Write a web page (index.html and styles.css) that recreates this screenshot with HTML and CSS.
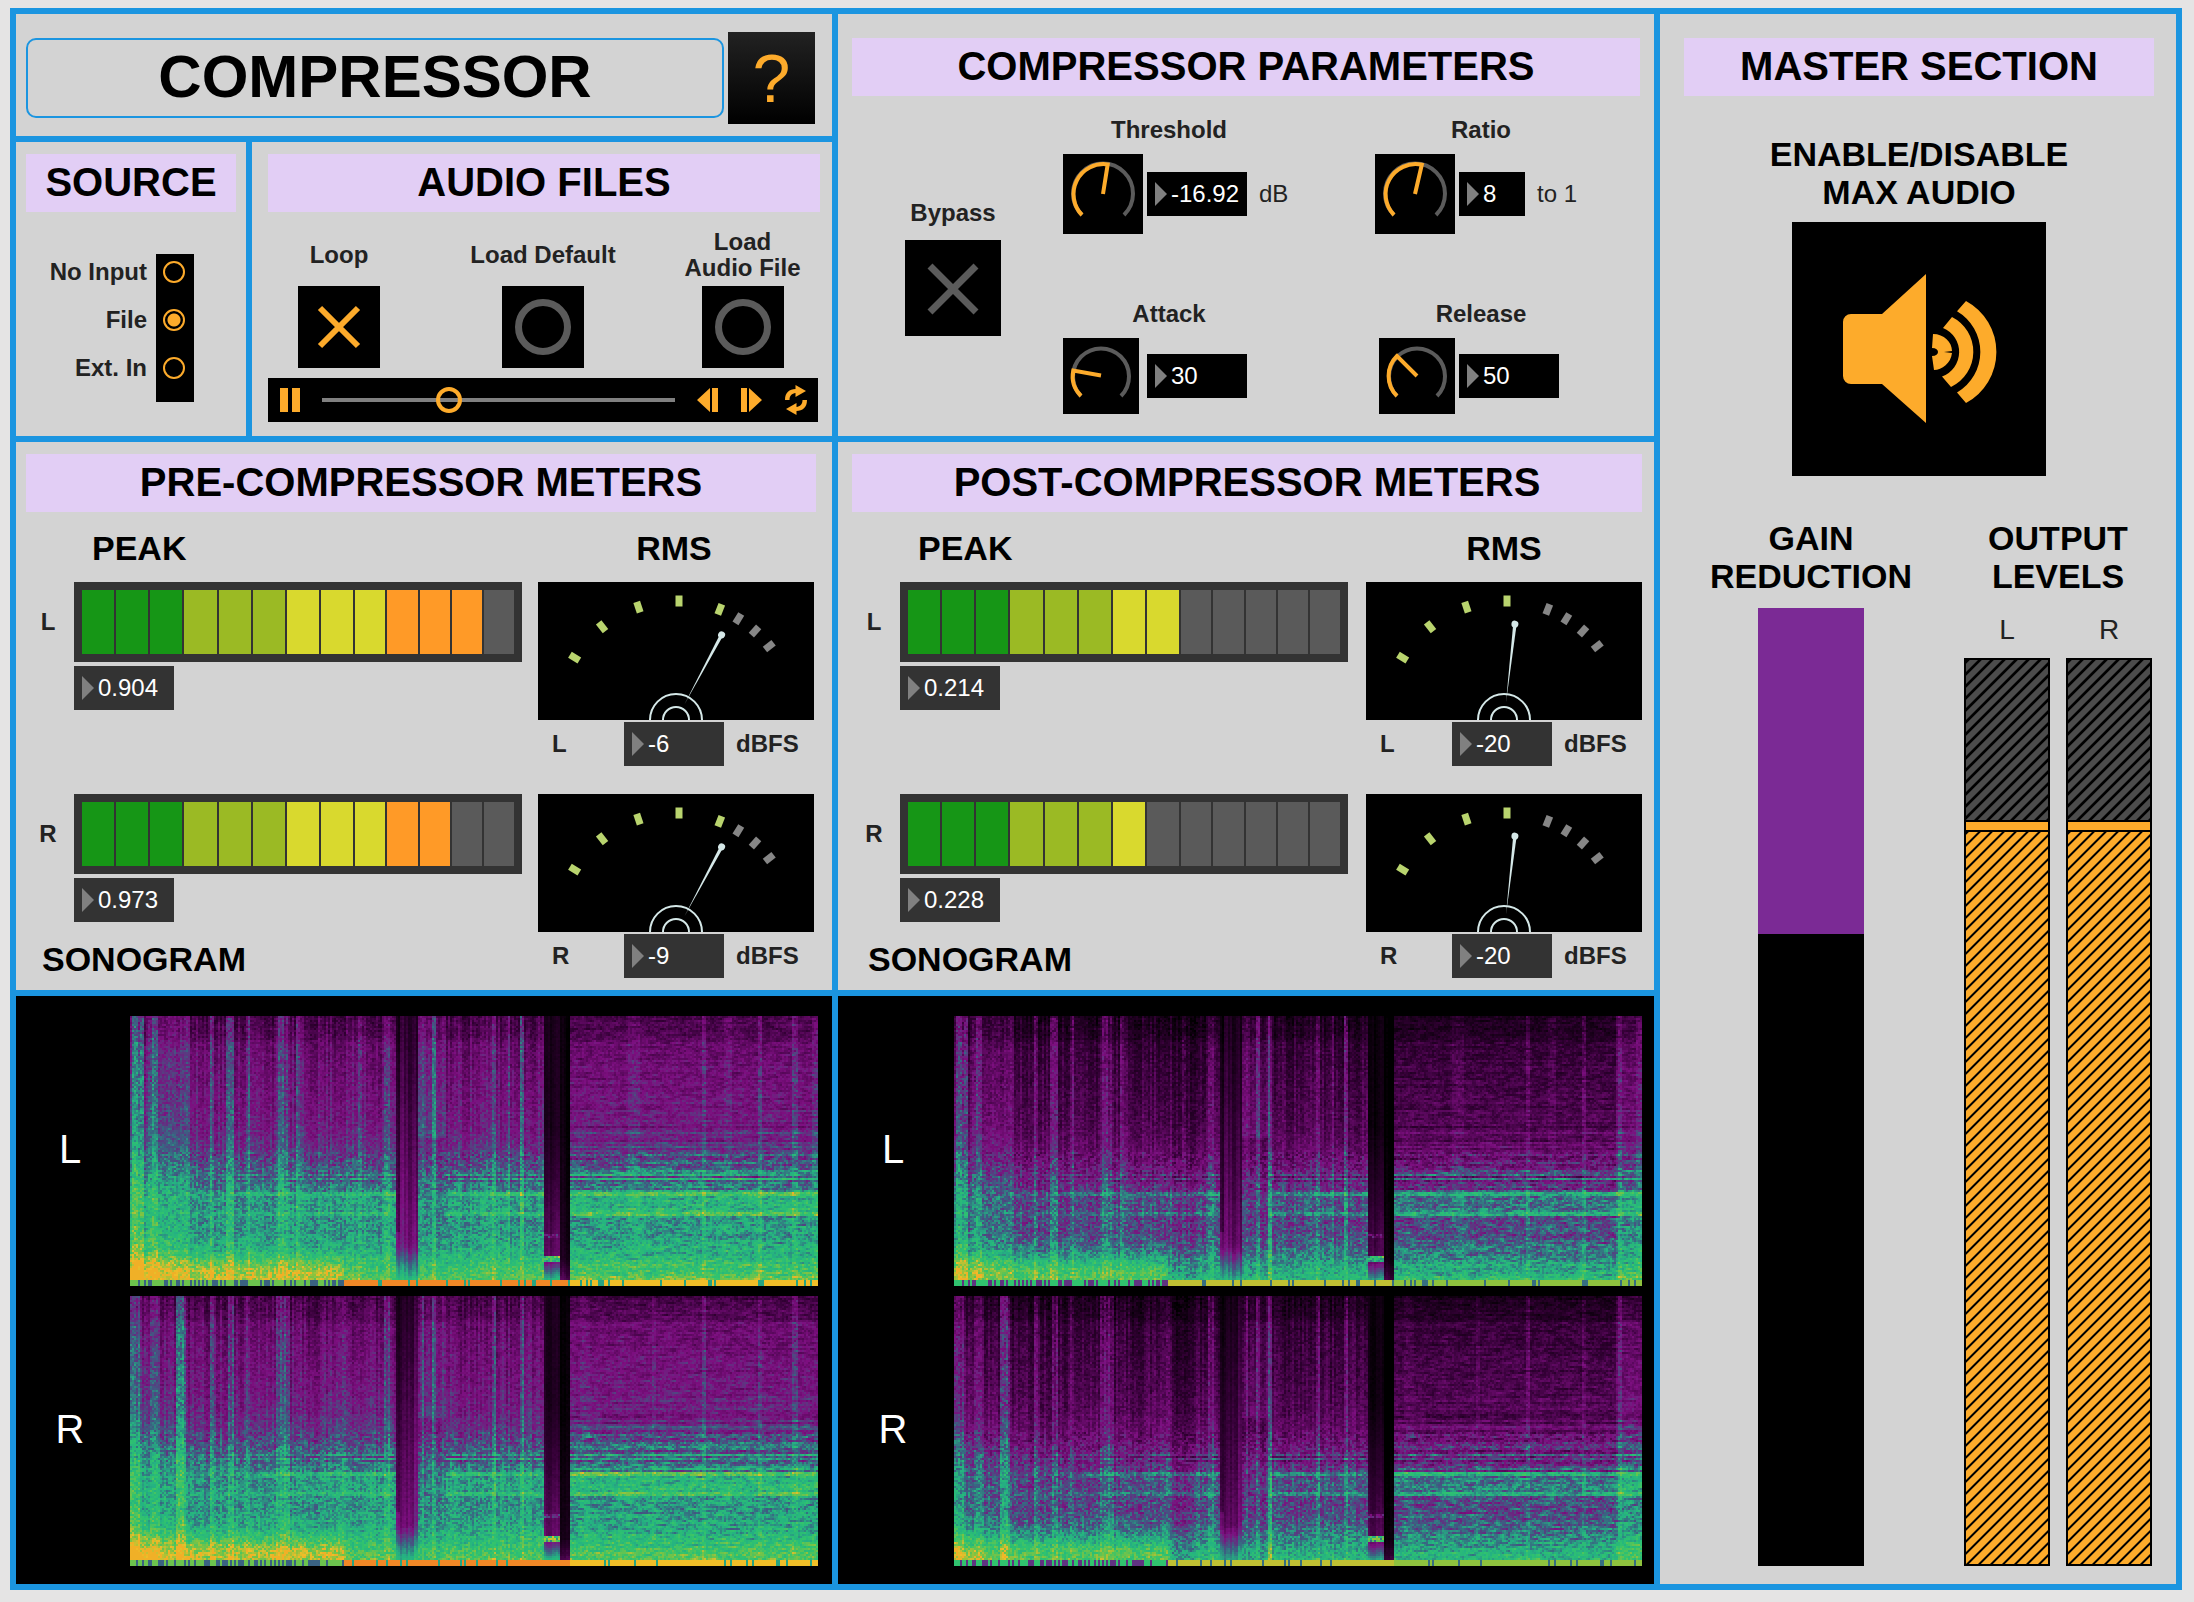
FILE: index.html
```html
<!DOCTYPE html>
<html lang="en">
<head>
<meta charset="UTF-8" /><meta name="viewport" content="width=device-width, initial-scale=1" />
<title>Compressor</title>
<link rel="stylesheet" href="styles.css">
</head>
<body>
<svg class="defs" aria-hidden="true">
  <symbol id="dial" viewBox="0 0 276 138">
    <g fill="#b9d46e">
      <rect x="134.5" y="13.5" width="7" height="11" transform="rotate(-58.4 138 138)"/>
      <rect x="134.5" y="13.5" width="7" height="11" transform="rotate(-38.4 138 138)"/>
      <rect x="134.5" y="13.5" width="7" height="11" transform="rotate(-18.4 138 138)"/>
      <rect x="137.5" y="13.5" width="7" height="11"/>
    </g>
    <g fill="#868686">
      <rect x="134.5" y="13.5" width="7" height="11" transform="rotate(31.6 138 138)"/>
      <rect x="134.5" y="13.5" width="7" height="11" transform="rotate(41.6 138 138)"/>
      <rect x="134.5" y="13.5" width="7" height="11" transform="rotate(51.6 138 138)"/>
    </g>
    <g fill="none" stroke="#d5e8e8" stroke-width="2">
      <circle cx="138" cy="138" r="26"/>
      <circle cx="138" cy="138" r="13"/>
    </g>
  </symbol>
  <symbol id="tick" viewBox="0 0 276 138">
    <rect x="134.5" y="13.5" width="7" height="11" transform="rotate(21.6 138 138)"/>
  </symbol>
  <symbol id="needle" viewBox="0 0 276 138" overflow="visible">
    <path d="M138 120L136.3 43h3.4z"/>
    <circle cx="138" cy="41.5" r="3.5"/>
  </symbol>
</svg>
<main class="app">
  <header class="panel title-panel">
    <h1>COMPRESSOR</h1>
    <button type="button" class="help" aria-label="Help">?</button>
  </header>

  <section class="panel params">
    <h2>COMPRESSOR PARAMETERS</h2>
    <div class="params-body">
      <div class="bypass">
        <label for="bypass">Bypass</label>
        <button type="button" id="bypass" class="toggle" aria-pressed="false">
          <svg width="96" height="96" viewBox="0 0 96 96"><path d="M25 26L71 72M71 26L25 72" stroke="#5b5b5b" stroke-width="7"/></svg>
        </button>
      </div>
      <div class="param">
        <label for="threshold">Threshold</label>
        <div class="control">
          <span class="knob"><svg width="80" height="80" viewBox="0 0 80 80"><path class="arc" d="M19 61A30 30 0 1 1 61 61"/><path class="val" d="M19 61A30 30 0 0 1 44.7 10.4L40 40"/></svg></span>
          <span class="num black"><input type="text" id="threshold" value="-16.92"></span>
          <span class="unit">dB</span>
        </div>
      </div>
      <div class="param">
        <label for="ratio">Ratio</label>
        <div class="control">
          <span class="knob"><svg width="80" height="80" viewBox="0 0 80 80"><path class="arc" d="M19 61A30 30 0 1 1 61 61"/><path class="val" d="M19 61A30 30 0 0 1 46.8 10.8L40 40"/></svg></span>
          <span class="num black narrow"><input type="text" id="ratio" value="8"></span>
          <span class="unit">to 1</span>
        </div>
      </div>
      <div class="param">
        <label for="attack">Attack</label>
        <div class="control">
          <span class="knob"><svg width="76" height="76" viewBox="0 0 76 76"><path class="arc" d="M18 58A28 28 0 1 1 58 58"/><path class="val" d="M18 58A28 28 0 0 1 10.3 32.5L38 37.5"/></svg></span>
          <span class="num black"><input type="text" id="attack" value="30"></span>
        </div>
      </div>
      <div class="param">
        <label for="release">Release</label>
        <div class="control">
          <span class="knob right"><svg width="76" height="76" viewBox="0 0 76 76"><path class="arc" d="M18 58A28 28 0 1 1 58 58"/><path class="val" d="M18 58A28 28 0 0 1 18 18L38 38"/></svg></span>
          <span class="num black"><input type="text" id="release" value="50"></span>
        </div>
      </div>
    </div>
  </section>

  <section class="panel master">
    <h2>MASTER SECTION</h2>
    <label for="power" class="sub center power-label">ENABLE/DISABLE<br>MAX AUDIO</label>
    <button type="button" id="power" class="power" aria-pressed="true">
      <svg width="254" height="254" viewBox="0 0 254 254" fill="#fdab2b">
        <path d="M59 92H90L134 52V201L90 162H59a8 8 0 0 1-8-8V100a8 8 0 0 1 8-8z"/>
        <path d="M141 112C152 112 160 120 160 129L152 130L160 131C159 141 150 148 142 148L140 134C148 134 148 126 140 126z"/>
        <path d="M160 95A39 39 0 0 1 159 165L150 154.5A26 26 0 0 0 151 106z"/>
        <path d="M174 79A58 58 0 0 1 174 181L165 170.5A47 47 0 0 0 165 89.3z"/>
      </svg>
    </button>
    <div class="levels">
      <div class="gain">
        <h3 class="sub center">GAIN<br>REDUCTION</h3>
        <div class="gain-bar"><div class="gain-fill" style="height:34%"></div></div>
      </div>
      <div class="output">
        <h3 class="sub center">OUTPUT<br>LEVELS</h3>
        <div class="output-bars">
          <div class="out"><span>L</span><div class="fader"><div class="off" style="height:160px"></div><div class="line"></div><div class="on"></div></div></div>
          <div class="out"><span>R</span><div class="fader"><div class="off" style="height:160px"></div><div class="line"></div><div class="on"></div></div></div>
        </div>
      </div>
    </div>
  </section>

  <div class="inputs">
    <section class="panel source">
      <h2>SOURCE</h2>
      <div class="source-body" role="radiogroup" aria-label="Source">
        <div class="source-labels">
          <label for="src-none">No Input</label>
          <label for="src-file">File</label>
          <label for="src-ext">Ext. In</label>
        </div>
        <div class="source-radios">
          <input type="radio" name="source" id="src-none">
          <input type="radio" name="source" id="src-file" checked>
          <input type="radio" name="source" id="src-ext">
        </div>
      </div>
    </section>
    <section class="panel files">
      <h2>AUDIO FILES</h2>
      <div class="file-buttons">
        <div class="file-btn">
          <label for="loop">Loop</label>
          <button type="button" id="loop" class="toggle" aria-pressed="true">
            <svg width="82" height="82" viewBox="0 0 82 82"><path d="M22 22L60 60M60 22L22 60" stroke="#fdab2b" stroke-width="6"/></svg>
          </button>
        </div>
        <div class="file-btn">
          <label for="load-default">Load Default</label>
          <button type="button" id="load-default" class="toggle">
            <svg width="82" height="82" viewBox="0 0 82 82"><circle cx="41" cy="41" r="24.5" fill="none" stroke="#5b5b5b" stroke-width="7"/></svg>
          </button>
        </div>
        <div class="file-btn">
          <label for="load-file">Load<br>Audio File</label>
          <button type="button" id="load-file" class="toggle">
            <svg width="82" height="82" viewBox="0 0 82 82"><circle cx="41" cy="41" r="24.5" fill="none" stroke="#5b5b5b" stroke-width="7"/></svg>
          </button>
        </div>
      </div>
      <div class="player">
        <button type="button" aria-label="Pause"><svg width="20" height="24" viewBox="0 0 20 24"><path d="M0 0h8v24H0zM12 0h8v24h-8z"/></svg></button>
        <input type="range" class="seek" min="0" max="100" value="35" aria-label="Position">
        <button type="button" aria-label="Previous"><svg width="22" height="24" viewBox="0 0 22 24"><path d="M0 12L13 0v24zM15 0h6v24h-6z"/></svg></button>
        <button type="button" aria-label="Next"><svg width="22" height="24" viewBox="0 0 22 24"><path d="M21 12L8 0v24zM0 0h6v24H0z"/></svg></button>
        <button type="button" aria-label="Repeat"><svg width="22" height="30" viewBox="0 0 22 30"><path d="M0 15C0 7.500 4.500 4 10.500 4V0L21 6L10.500 12V8C7 8.500 4.500 10.500 4.500 15zM22 15C22 22.500 17.500 26 11.500 26V30L1 24L11.500 18V22C15 21.500 17.500 19.500 17.500 15z"/></svg></button>
      </div>
    </section>
  </div>

  <section class="panel meters pre">
    <h2>PRE-COMPRESSOR METERS</h2>
    <div class="meter-heads"><h3 class="sub">PEAK</h3><h3 class="sub center">RMS</h3></div>
    <div class="channel">
      <span class="side">L</span>
      <div class="leds" data-lit="12"></div>
      <span class="num peak"><input type="text" value="0.904" aria-label="Peak left"></span>
      <div class="rms">
        <svg class="vu" viewBox="0 0 276 138"><use href="#dial"/><use href="#tick" fill="#b9d46e"/><g fill="#d5e8e8" transform="rotate(28.2 138 138)"><use href="#needle"/></g></svg>
        <div class="readout"><label for="pre-l">L</label><span class="num"><input type="text" id="pre-l" value="-6"></span><span>dBFS</span></div>
      </div>
    </div>
    <div class="channel">
      <span class="side">R</span>
      <div class="leds" data-lit="11"></div>
      <span class="num peak"><input type="text" value="0.973" aria-label="Peak right"></span>
      <h3 class="sub sono-title">SONOGRAM</h3>
      <div class="rms">
        <svg class="vu" viewBox="0 0 276 138"><use href="#dial"/><use href="#tick" fill="#b9d46e"/><g fill="#d5e8e8" transform="rotate(28.2 138 138)"><use href="#needle"/></g></svg>
        <div class="readout"><label for="pre-r">R</label><span class="num"><input type="text" id="pre-r" value="-9"></span><span>dBFS</span></div>
      </div>
    </div>
  </section>

  <section class="panel meters post">
    <h2>POST-COMPRESSOR METERS</h2>
    <div class="meter-heads"><h3 class="sub">PEAK</h3><h3 class="sub center">RMS</h3></div>
    <div class="channel">
      <span class="side">L</span>
      <div class="leds" data-lit="8"></div>
      <span class="num peak"><input type="text" value="0.214" aria-label="Peak left"></span>
      <div class="rms">
        <svg class="vu" viewBox="0 0 276 138"><use href="#dial"/><use href="#tick" fill="#868686"/><g fill="#d5e8e8" transform="rotate(6.5 138 138)"><use href="#needle"/></g></svg>
        <div class="readout"><label for="post-l">L</label><span class="num"><input type="text" id="post-l" value="-20"></span><span>dBFS</span></div>
      </div>
    </div>
    <div class="channel">
      <span class="side">R</span>
      <div class="leds" data-lit="7"></div>
      <span class="num peak"><input type="text" value="0.228" aria-label="Peak right"></span>
      <h3 class="sub sono-title">SONOGRAM</h3>
      <div class="rms">
        <svg class="vu" viewBox="0 0 276 138"><use href="#dial"/><use href="#tick" fill="#868686"/><g fill="#d5e8e8" transform="rotate(6.5 138 138)"><use href="#needle"/></g></svg>
        <div class="readout"><label for="post-r">R</label><span class="num"><input type="text" id="post-r" value="-20"></span><span>dBFS</span></div>
      </div>
    </div>
  </section>

  <section class="sono pre" aria-label="Pre-compressor sonogram">
    <span>L</span><canvas width="344" height="135" data-ch="L" data-seed="11"></canvas>
    <span>R</span><canvas width="344" height="135" data-ch="R" data-seed="23"></canvas>
  </section>
  <section class="sono post" aria-label="Post-compressor sonogram">
    <span>L</span><canvas width="344" height="135" data-ch="L" data-seed="11" data-post="1"></canvas>
    <span>R</span><canvas width="344" height="135" data-ch="R" data-seed="23" data-post="1"></canvas>
  </section>
</main>
<script src="script.js"></script>
</body>
</html>
```
FILE: styles.css
```css
:root{--bg:#e5e4e4;--panel:#d3d3d3;--line:#1b95e0;--band:#e2cef5;--amber:#fdab2b;--dark:#333;--txt:#222;}
*,*:before,*:after{box-sizing:border-box;}
body{margin:0;padding:8px 12px 12px 10px;background:var(--bg);color:var(--txt);font:bold 24px/26px "Liberation Sans",Arial,sans-serif;}
h1,h2,h3{margin:0;color:#000;}
svg{display:block;}
button{padding:0;border:0;background:none;color:inherit;font:inherit;cursor:pointer;}
.defs{position:absolute;width:0;height:0;}

.app{display:grid;grid-template-columns:816fr 816fr 516fr;gap:6px;border:6px solid var(--line);background:var(--line);}
.panel{background:var(--panel);min-width:0;}
.panel h2{height:58px;background:var(--band);font-size:40px;line-height:56px;text-align:center;white-space:nowrap;}
.sub{font-size:34px;line-height:38px;font-weight:bold;color:#000;}
.center{text-align:center;}

/* title */
.title-panel{display:flex;align-items:center;gap:4px;padding:18px 17px 12px 10px;}
h1{flex:1;height:80px;border:2px solid var(--line);border-radius:10px;font-size:60px;line-height:74px;text-align:center;}
.help{width:87px;height:92px;background:linear-gradient(#222,#000);color:var(--amber);font-size:68px;font-weight:normal;line-height:92px;}

/* source + files */
.inputs{display:grid;grid-template-columns:230fr 580fr;gap:6px;grid-column:1;grid-row:2;}
.source{padding:12px 10px;}
.source-body{display:flex;justify-content:flex-end;gap:9px;margin:42px 42px 0 0;}
.source-labels,.source-radios{display:flex;flex-direction:column;gap:26px;padding-top:7px;}
.source-labels{text-align:right;line-height:22px;}
.source-radios{width:38px;height:148px;padding-left:7px;background:#000;}
.source-radios input{appearance:none;margin:0;width:22px;height:22px;border:2px solid var(--amber);border-radius:50%;}
.source-radios input:checked{background:radial-gradient(var(--amber) 6px,transparent 7px);}
.files{padding:12px 12px 14px 16px;}
.file-buttons{display:grid;grid-template-columns:142fr 266fr 133fr;margin-top:17px;padding-right:11px;}
.file-btn{display:flex;flex-direction:column;align-items:center;gap:5px;text-align:center;}
.file-btn label{display:flex;align-items:center;height:52px;white-space:nowrap;}
.toggle{background:#000;}
.player{display:flex;align-items:center;height:44px;margin:10px 2px 0 0;padding:0 11px 0 12px;gap:22px;background:#000;}
.player svg{fill:var(--amber);}
.seek{flex:1;min-width:0;appearance:none;margin:0;height:26px;background:linear-gradient(#808080,#808080) center/100% 4px no-repeat;}
.seek::-webkit-slider-thumb{appearance:none;width:26px;height:26px;border:4px solid var(--amber);border-radius:50%;}

/* parameters */
.params{grid-column:2;grid-row:1/3;padding:24px 14px 0;}
.params-body{display:grid;grid-template-columns:96px 274px 312px;justify-content:center;margin-top:21px;row-gap:67px;}
.bypass{grid-row:1/3;display:flex;flex-direction:column;align-items:center;gap:14px;padding-top:83px;}
.param{justify-self:end;width:212px;}
.param label{display:block;text-align:center;}
.control{display:flex;align-items:center;gap:4px;margin-top:11px;}
.knob{width:80px;}
.knob svg{background:#000;}
.knob.right svg{margin-left:auto;}
.knob path{fill:none;stroke-width:4;}
.knob .arc{stroke:#5b5b5b;}
.knob .val{stroke:var(--amber);}
.unit{padding-left:8px;font-weight:normal;}
.num{position:relative;display:block;flex:none;width:100px;height:44px;background:var(--dark);}
.num:before{content:"";position:absolute;left:8px;top:10px;border:12px solid transparent;border-left-color:#808080;border-right:0;}
.num input{display:block;width:100%;height:44px;padding:0 0 0 24px;border:0;background:none;color:#fff;font:24px "Liberation Sans",Arial,sans-serif;}
.num.black{background:#000;}
.num.narrow{width:66px;}

/* meters */
.meters{padding:12px 16px 12px 10px;}
.meters.post{padding:12px 12px 12px 14px;}
.meter-heads{display:grid;grid-template-columns:1fr 276px;margin:17px 0 15px;padding-left:66px;}
.channel{display:grid;grid-template-columns:48px 1fr 294px;grid-template-rows:80px 1fr auto;row-gap:4px;height:184px;}
.channel + .channel{margin-top:28px;}
.pre .meter-heads{padding-right:4px;}
.pre .channel{grid-template-columns:48px 1fr 292px;padding-right:2px;}
.side{align-self:center;text-align:center;padding-right:4px;}
.leds{display:flex;gap:2px;padding:8px;background:var(--dark);}
.leds i{flex:32;background:#5a5a5a;}
.leds i:nth-child(n+9){flex:30;}
.leds .g{background:#169616;}
.leds .l{background:#9bba24;}
.leds .y{background:#d9d92e;}
.leds .o{background:#ff9a27;}
.peak{grid-column:2;grid-row:2;}
.sono-title{grid-column:1/3;grid-row:3;padding-left:16px;}
.rms{grid-column:3;grid-row:1/4;justify-self:end;width:276px;}
.vu{width:276px;height:138px;background:#000;}
.readout{display:grid;grid-template-columns:86px 100px 1fr;align-items:center;margin-top:2px;}
.readout label{padding-left:14px;}
.readout span:last-child{padding-left:12px;}

/* sonograms */
.sono{display:grid;grid-template-columns:114px 1fr;row-gap:10px;align-items:center;padding:20px 14px 18px 0;background:#000;color:#fff;font-size:40px;font-weight:normal;text-align:center;}
.sono.post{grid-template-columns:116px 1fr;padding-right:12px;}
.sono span{padding:0 6px 4px 0;}
.sono canvas{display:block;width:100%;height:270px;image-rendering:pixelated;}

/* master */
.master{grid-column:3;grid-row:1/5;display:flex;flex-direction:column;padding:24px 22px 18px 24px;}
.power-label{margin-top:39px;}
.power{align-self:center;margin-top:11px;background:#000;}
.levels{flex:1;display:flex;justify-content:space-between;margin-top:43px;padding-right:2px;}
.gain,.output{display:flex;flex-direction:column;}
.gain{width:254px;align-items:center;}
.gain-bar{flex:1;width:106px;margin-top:13px;background:#000;}
.gain-fill{background:#7b2a95;}
.output{width:188px;}
.output-bars{flex:1;display:flex;gap:16px;margin-top:19px;}
.out{flex:1;display:flex;flex-direction:column;gap:12px;text-align:center;font-size:28px;line-height:32px;font-weight:normal;}
.fader{flex:1;display:flex;flex-direction:column;border:2px solid #000;}
.off,.on{background-size:12px 12px;}
.off{background-image:linear-gradient(135deg,#000 14%,#4c4c4c 18% 48%,#000 52% 64%,#4c4c4c 68% 98%,#000);}
.on{flex:1;background-image:linear-gradient(135deg,#000 10%,var(--amber) 14% 48%,#000 52% 60%,var(--amber) 64% 98%,#000);}
.line{height:12px;border:2px solid #000;border-width:2px 0;background:var(--amber);}
```
FILE: script.js
```js
// peak meter segments
document.querySelectorAll('.leds').forEach(bar=>{
  const colors='ggglllyyyoooo', lit=+bar.dataset.lit;
  for(let i=0;i<13;i++){
    const seg=document.createElement('i');
    if(i<lit) seg.className=colors[i];
    bar.appendChild(seg);
  }
});

// level -> colour
const stops=[[0,0,0,0],[.18,50,0,52],[.36,125,15,128],[.5,58,98,130],[.62,36,178,130],[.72,48,195,110],[.83,130,195,65],[.92,240,190,40],[1,240,80,35]];
function colour(v){
  v=Math.max(0,Math.min(1,v));
  for(let i=1;i<stops.length;i++){
    if(v<=stops[i][0]){
      const a=stops[i-1],b=stops[i],k=(v-a[0])/(b[0]-a[0]);
      return [1,2,3].map(c=>a[c]+(b[c]-a[c])*k);
    }
  }
}
function random(seed){
  return ()=>{
    seed=(seed+0x6D2B79F5)|0;
    let t=Math.imul(seed^seed>>>15,1|seed);
    t=t+Math.imul(t^t>>>7,61|t)^t;
    return ((t^t>>>14)>>>0)/4294967296;
  };
}
// average level from top (high freq) to bottom (low freq)
const curve=[[0,.23],[.08,.26],[.1,.31],[.25,.34],[.42,.38],[.52,.44],[.6,.51],[.68,.57],[.8,.58],[.88,.64],[.94,.73],[1,.79]];
function base(t){
  for(let i=1;i<curve.length;i++){
    if(t<=curve[i][0]){
      const a=curve[i-1],b=curve[i];
      return a[1]+(b[1]-a[1])*(t-a[0])/(b[0]-a[0]);
    }
  }
  return .79;
}
// transients: position, width, gain
const hits={
  L:[[.01,.007,.22],[.032,.005,.16],[.06,.01,.1],[.075,.01,.12],[.118,.001,.16],[.145,.005,.15],[.17,.002,.13],[.22,.006,.14],[.243,.001,.12],[.333,.001,.12],[.372,.003,.15],[.425,.001,.14],[.44,.001,.14],[.527,.002,.14],[.55,.001,.13],[.568,.001,.18],[.73,.008,.05],[.833,.001,.1],[.868,.004,.04],[.915,.002,.11],[.966,.003,.11],[.996,.004,.08]],
  R:[[.006,.007,.16],[.035,.006,.12],[.073,.006,.22],[.118,.001,.12],[.145,.004,.13],[.17,.001,.1],[.22,.009,.13],[.31,.001,.12],[.372,.003,.15],[.425,.001,.08],[.44,.001,.12],[.527,.002,.13],[.568,.001,.13],[.66,.006,.04],[.76,.002,.05],[.833,.001,.1],[.915,.002,.08],[.966,.003,.11]]
};
document.querySelectorAll('.sono canvas').forEach(cv=>{
  const w=cv.width,h=cv.height,ctx=cv.getContext('2d'),img=ctx.createImageData(w,h);
  const rnd=random(+cv.dataset.seed),post=!!cv.dataset.post;
  const rows=Array.from({length:h},()=>rnd()-.5);
  const cols=Array.from({length:w},()=>rnd()-.5);
  const left=new Array(h).fill(0);
  for(let x=0;x<w;x++){
    const u=x/w;
    let hit=0;
    hits[cv.dataset.ch].forEach(([p,s,g])=>{ if(Math.abs(u-p)<s+.001) hit=Math.max(hit,g); });
    const gap1=u>.386&&u<.417, pause=u>=.417&&u<.457, gap2=u>.6&&u<.638, steady=u>=.638;
    for(let y=0;y<h;y++){
      const t=y/(h-1);
      let v=base(t);
      // noise is smeared a little along time
      left[y]=left[y]*(steady?.5:.2)+(rnd()-.5);
      v+=left[y]*(t>.5?.16:.1);
      v+=cols[x]*(steady?.02:.12)*(1-t*.6);
      if(u<.09) v+=.09*(1-u/.09)*(.4+t*.6);
      v+=hit*(1-t*.55)*(.6+rnd()*.6);
      if(steady){
        v+=rows[y]*(t>.4&&t<.65?.12:.04);
        if(t>.65&&t<.74) v+=.05;
        if(t>.5&&t<.65) v+=.02;
      }
      // sustained harmonics fade in with time
      if(u>.07&&!gap1&&!gap2&&!pause){
        const k=Math.min(1,.25+(u-.07)*2.4)*(steady?1.2:1);
        if(Math.abs(t-.66)<.008) v+=.13*k;
        if(Math.abs(t-.735)<.004) v+=.09*k;
        if(u>.24&&t>.668&&t<.735) v+=.03;
        if(Math.abs(t-.603)<.004||Math.abs(t-.588)<.004) v+=.07*k;
        if(Math.abs(t-.596)<.003||Math.abs(t-.611)<.004) v-=.06*k;
      }
      if(pause) v+=t<.45?.05:-.03;
      if(gap1) v=.15+cols[x]*.12+t*.24+left[y]*.04+(t>.85?(t-.85)*2.2:0)-(u<.391&&t<.8?.08:0);
      if(gap2){
        const edge=u>.624;
        v=(edge?.01:.08)+(cols[x]+.2)*.08+(t>.4?(t-.4)*.4:0)*(edge?.3:1)+left[y]*.03+(t>.9?(t-.9)*(edge?2:4):0);
        if(Math.abs(t-.905)<.012&&!edge) v=.55+rnd()*.35;
        if(Math.abs(t-.82)<.008&&!edge) v+=.25*rnd();
      }
      // low end carries more energy during the intro
      if(u<.31&&t>.86) v+=.11*Math.min(1,(t-.86)/.08);
      if(post){
        v-=gap2||gap1?.05:t>.85?.11:.125;
        if(u>.315&&u<.35) v-=.06;
        if(u>.456&&u<.46) v+=.18;
        if(u>.965) v+=.09;
      }
      v=Math.min(v,.93);
      if(t>.985){
        v=u<.31?(cols[x]>-.1?.8:.5):(cols[x]>-.4?(steady?.92:.96):.6);
        if(post) v-=.08;
      }
      const c=colour(v),i=(y*w+x)*4;
      img.data[i]=c[0];img.data[i+1]=c[1];img.data[i+2]=c[2];img.data[i+3]=255;
    }
  }
  ctx.putImageData(img,0,0);
});
```
